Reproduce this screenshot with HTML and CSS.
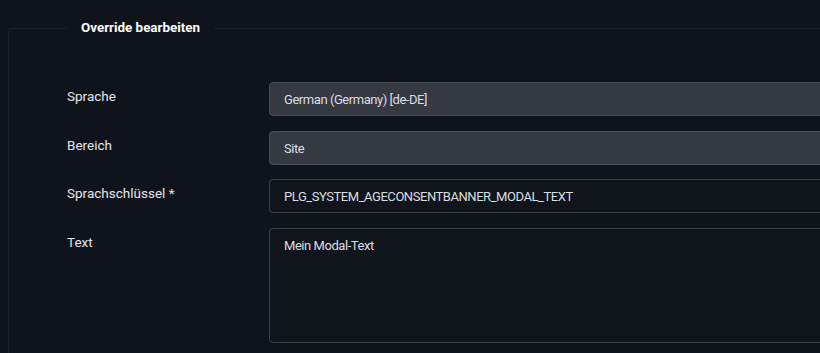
FILE: index.html
```html
<!DOCTYPE html>
<html lang="de">
<head>
    <meta charset="UTF-8">
    <meta name="viewport" content="width=device-width, initial-scale=1.0">
    <title>Override bearbeiten</title>
    <link rel="stylesheet" href="styles.css">
</head>
<body>
    <fieldset class="options-form">
        <legend>Override bearbeiten</legend>

        <div class="control-group">
            <label class="control-label" for="language">Sprache</label>
            <div class="controls">
                <input class="form-control" id="language" type="text" value="German (Germany) [de-DE]" disabled>
            </div>
        </div>

        <div class="control-group">
            <label class="control-label" for="client">Bereich</label>
            <div class="controls">
                <input class="form-control" id="client" type="text" value="Site" disabled>
            </div>
        </div>

        <div class="control-group">
            <label class="control-label" for="key">Sprachschlüssel *</label>
            <div class="controls">
                <input class="form-control" id="key" type="text" value="PLG_SYSTEM_AGECONSENTBANNER_MODAL_TEXT">
            </div>
        </div>

        <div class="control-group">
            <label class="control-label" for="override">Text</label>
            <div class="controls">
                <textarea class="form-control text-area" id="override">Mein Modal-Text</textarea>
            </div>
        </div>
    </fieldset>
</body>
</html>
```

FILE: styles.css
```css
* {
    margin: 0;
    padding: 0;
    box-sizing: border-box;
}

html,
body {
    height: 353px;
    overflow: hidden;
}

body {
    font-family: Roboto, "Liberation Sans", sans-serif;
    font-size: 13.5px;
    line-height: 1.2;
    background-color: #0f141c;
    color: #e4e6e9;
}

.options-form {
    margin: 20px -40px 0 8px;
    padding: 46px 0 0 58px;
    border: 1px solid #1b2029;
    border-radius: 4px;
    min-height: 400px;
}

.options-form legend {
    padding: 0 14px;
    font-size: 13.4px;
    line-height: 16px;
    font-weight: bold;
    color: #fff;
}

.control-group {
    display: flex;
    margin-bottom: 14.6px;
}

.control-label {
    width: 202px;
    flex-shrink: 0;
    padding-top: 7px;
    line-height: 14px;
}

.controls {
    flex: 1;
}

.form-control {
    display: block;
    width: 100%;
    height: 34px;
    padding: 1px 14px 0;
    font-family: inherit;
    font-size: 13px;
    letter-spacing: -0.45px;
    color: #dcdee1;
    background-color: #10151c;
    border: 1px solid #3b4048;
    border-radius: 4px;
    outline: none;
}

.form-control:disabled {
    background-color: #343942;
    border-color: #484d55;
    color: #dcdee1;
    opacity: 1;
}

.text-area {
    height: 115px;
    padding: 9px 14px;
    line-height: 16px;
    resize: none;
}
```
